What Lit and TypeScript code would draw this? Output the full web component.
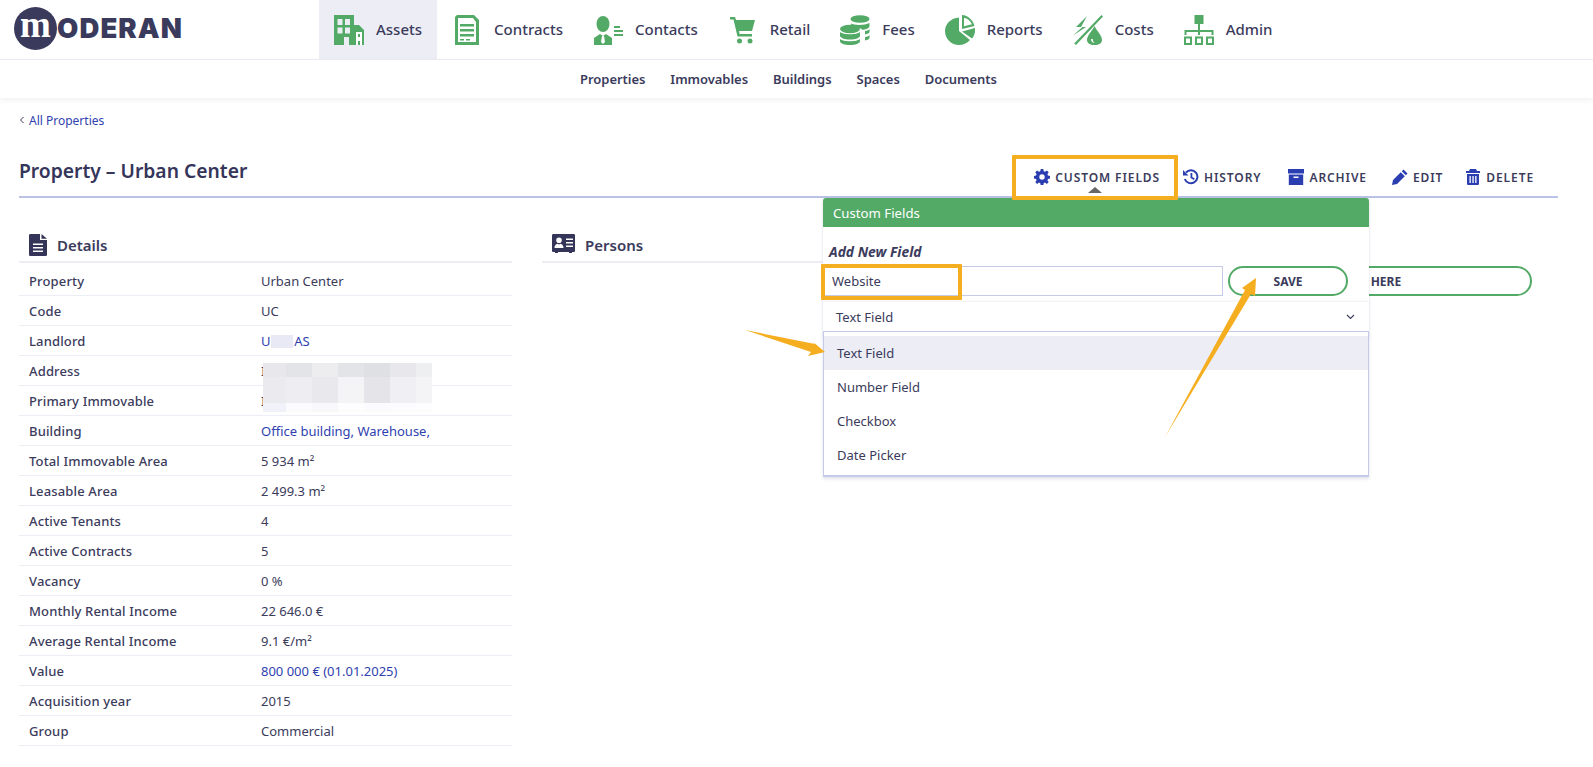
import { LitElement, html, css, svg } from "lit";
import { customElement } from "lit/decorators.js";

const NAV = [
  ["Assets", "assets"], ["Contracts", "contracts"], ["Contacts", "contacts"], ["Retail", "retail"],
  ["Fees", "fees"], ["Reports", "reports"], ["Costs", "costs"], ["Admin", "admin"],
];
const SUB = ["Properties", "Immovables", "Buildings", "Spaces", "Documents"];
const ROWS: [string, string, boolean?][] = [
  ["Property", "Urban Center"], ["Code", "UC"], ["Landlord", "U       AS", true], ["Address", "I"],
  ["Primary Immovable", "I"], ["Building", "Office building, Warehouse,", true],
  ["Total Immovable Area", "5 934 m²"], ["Leasable Area", "2 499.3 m²"], ["Active Tenants", "4"],
  ["Active Contracts", "5"], ["Vacancy", "0 %"], ["Monthly Rental Income", "22 646.0 €"],
  ["Average Rental Income", "9.1 €/m²"], ["Value", "800 000 € (01.01.2025)", true],
  ["Acquisition year", "2015"], ["Group", "Commercial"],
];
const PIX = [
  ["#e8e8ec", "#e3e4e8", "#ededf0", "#e3e4e8", "#dfe0e4", "#e8e8ec", "#eeeff1"],
  ["#ebebef", "#eeeef2", "#e9e9ed", "#f4f4f7", "#e5e5e9", "#f0f0f4", "#f4f4f7"],
  ["#f1f2f9", "#fbfbfd", "#f8f8fb", "#fdfdfe", "#fbfbfd", "#fcfcfe", "#fdfdfe"],
];

const navIcons: Record<string, unknown> = {
  assets: svg`<path fill-rule="evenodd" d="M0 0h20v10h5l5 5v15H20v-8h0V30h-5v-8h-5v8H0zM3.500 4v6h5V4zM11 4v6h5V4zM3.500 12.500v6h5v-6zM11 12.500v6h5v-6z"/><path fill="#fff" d="M22 17h6v13h-2v-4h-2v4h-2zM24 19v3h2v-3z" fill-rule="evenodd"/>`,
  contracts: svg`<path fill-rule="evenodd" d="M5 0h17l5 5v25H3V2zM6 3v24h18V7l-3-4z"/><path d="M8 9h14v2.500H8zM8 14h14v2.500H8zM8 19h14v2.500H8zM8 24h4v1.500H8zM14 24h4v1.500h-4z"/>`,
  contacts: svg`<ellipse cx="10" cy="9" rx="6.500" ry="8"/><path d="M1 30v-7l6-4 3 2 3-2 6 4v7z"/><path fill="#fff" d="M9 21h2l1 6-2 2-2-2z"/><path d="M21 11h6v2h-6zM21 15h9v2h-9zM21 19h9v2h-9z"/>`,
  retail: svg`<path d="M2 2h5l1 3h19l-3 11H11l.6 3H24v2.500H9.500L5.500 4.500H2z"/><circle cx="11.500" cy="26" r="2.500"/><circle cx="22" cy="26" r="2.500"/>`,
  fees: svg`<ellipse cx="20" cy="4" rx="9.500" ry="3.800"/><path d="M11 8.500c3 2 14 2 18.500-.5v3c0 2-3 3.500-7 3.800-3-2.500-7-3.500-11-3.500zM25 16c2 0 4.500-1 4.500-2.500V17c0 1-2 2-4.500 2.500zM25 22c2 0 4.500-1 4.500-2.500V23c0 1-2 2-4.500 2.500z"/><ellipse cx="10" cy="14" rx="10" ry="4.200"/><path d="M0 17c3 3 17 3 20 0v3.500c0 2.500-4.500 4-10 4s-10-1.500-10-4zM0 24c3 3 17 3 20 0v2c0 2.500-4.500 4-10 4s-10-1.500-10-4z"/>`,
  reports: svg`<path d="M14 2.500C6 3 0 9 0 16c0 8 6.500 14 14 14 4 0 8-1.500 11-5L14 16z"/><path fill-rule="evenodd" d="M17 0c6 .5 11 5 12.500 11L17 14zM19 2.800v8.400l8-2C25.500 6 22.500 3.500 19 2.800z"/><path d="M17 16.500 30 13c.5 4-.5 7.500-3 10.500z"/>`,
  costs: svg`<path d="M14 1 3 12h6.500L0 20.500 13 12H8zM28.500 0 30 1.500 3 30l-1.800-1.500z"/><path fill-rule="evenodd" d="M21.500 11c2 4.500 7.500 9.500 7.500 14 0 3-3 5-7.500 5S14 28 14 25c0-4.500 5.500-9.500 7.500-14zM18 24c0 2.500 1.500 3.800 3.500 4-1-.8-1.700-2-1.700-4z"/>`,
  admin: svg`<path d="M10.500 0h9v9h-9zM14 9h2v6h13.500v5h-2v-3H16v3h-2v-3H2.500v3h-2v-5H14z"/><path fill-rule="evenodd" d="M0 21.500h8V30H0zM2 23.500V28h4v-4.500zM11 21.500h8V30h-8zM13 23.500V28h4v-4.500zM22 21.500h8V30h-8zM24 23.500V28h4v-4.500z"/>`,
};

@customElement("app-root")
export class AppRoot extends LitElement {
  static styles = css`
    :host { display: block; position: relative; height: 767px; overflow: hidden; background: #fff;
      font-family: "Noto Sans", sans-serif; font-size: 13px; color: #3b3b5c; }
    * { box-sizing: border-box; }
    .top { display: flex; height: 60px; border-bottom: 1px solid #ecedf5; }
    .logo { width: 319px; display: flex; align-items: flex-start; padding: 7px 0 0 14px; }
    .mark { width: 43px; height: 43px; border-radius: 50%; background: #3a3a5c; color: #fff; flex: none;
      display: flex; align-items: center; justify-content: center; font: 700 37px/30px "Liberation Serif", serif;
      padding-bottom: 7px; }
    .word { font: 900 27.500px/30px Inter, sans-serif; color: #3a3a5c; margin: 6px 0 0 0; letter-spacing: 1.100px; }
    .nav { display: flex; }
    .item { display: flex; align-items: center; gap: 12px; padding: 0 15px; font-size: 15px; font-weight: 500; height: 59px; }
    .item span { padding-bottom: 2px; }
    .item.on { background: #ecedf5; }
    .item svg { width: 30px; height: 30px; fill: #53aa67; flex: none; }
    .sub { display: flex; gap: 25px; height: 38px; padding-left: 580px; align-items: center; font-weight: 600; letter-spacing: -0.04px;
      box-shadow: 0 2px 6px rgba(60, 60, 120, 0.08); position: relative; }
    .page { padding: 0 35px 0 19px; }
    .crumb { display: flex; gap: 4px; align-items: center; height: 44px; color: #2f3fb0; font-size: 12px; }
    .chev { width: 6px; height: 8px; fill: none; stroke: #3b3b5c; stroke-width: 1; }
    .head { display: flex; justify-content: space-between; height: 56px; border-bottom: 2px solid #bcc2e4; padding-right: 24px; }
    h1 { margin: 0; font-size: 19.300px; font-weight: 600; line-height: 26px; margin-top: 16px; color: #35355a; }
    .acts { display: flex; gap: 25px; padding-top: 25px; }
    .act { display: flex; gap: 5px; align-items: center; height: 20px; font-size: 12px; font-weight: 600; letter-spacing: 0.9px; white-space: nowrap; }
    .act svg { width: 16px; height: 16px; flex: none; fill: #2a3eb1; }
    .act.hist { margin-left: -2px; }
    .act.arch { margin-left: 2px; }
    .act.del { margin-left: -3px; }
    .cols { display: grid; grid-template-columns: 493px 493px 493px; gap: 30px; }
    .sec { display: flex; align-items: center; gap: 10px; height: 65px; padding: 30px 0 0 10px; border-bottom: 2px solid #ecedf5; font-size: 15px; font-weight: 600; }
    .sec svg { flex: none; fill: #35355a; }
    .row { display: grid; grid-template-columns: 232px 1fr; height: 30px; align-items: center; padding: 0 0 0 10px; border-bottom: 1px solid #ecedf5; }
    .k { font-weight: 500; letter-spacing: 0.15px; }
    .v { white-space: pre; }
    .link { color: #2f3fb0; }
    .table { position: relative; padding-top: 3px; }
    .blk { position: absolute; }
    .b1 { left: 252px; top: 72px; width: 22px; height: 13px; background: #e8e9f5; }
    .b2 { left: 244px; top: 100px; width: 169px; height: 49px; display: grid;
      grid-template-columns: 23px 26px 26px 26px 26px 26px 16px; grid-template-rows: 14px 26px 9px; }
    .third { padding-top: 68px; display: flex; justify-content: flex-end; padding-right: 26px; }
    .pill { width: 320px; height: 30px; border: 2px solid #53aa67; border-radius: 15px; display: flex; align-items: center; justify-content: center;
      font-size: 12px; font-weight: 700; }
    .panel { position: absolute; left: 823px; top: 198px; width: 546px; height: 139px; background: #fff; border-radius: 3px 3px 0 0;
      box-shadow: 0 1px 3px rgba(60, 60, 120, 0.18); }
    .ph { height: 29px; background: #53aa67; color: #fff; padding-left: 10px; display: flex; align-items: center; border-radius: 3px 3px 0 0; font-size: 13.200px; }
    .pl { font-weight: 700; font-style: italic; margin: 15px 0 0 6px; line-height: 20px; height: 20px; font-size: 13.800px; }
    .pr { display: flex; gap: 5px; margin-top: 4px; }
    .inp { width: 400px; height: 30px; border: 1px solid #c5cae9; padding-left: 8px; display: flex; align-items: center; }
    .save { width: 120px; height: 30px; border: 2px solid #53aa67; border-radius: 15px; display: flex; align-items: center; justify-content: center; font-size: 12px; font-weight: 700; }
    .sel { height: 29px; margin-top: 6px; padding: 0 14px 0 13px; display: flex; align-items: center; justify-content: space-between;
      box-shadow: 0 -1px 2px rgba(60, 60, 120, 0.08); }
    .sel svg { width: 9px; height: 6px; fill: none; stroke: #3b3b5c; stroke-width: 1.100; }
    .menu { position: absolute; left: 0; top: 133px; width: 546px; height: 146px; background: #fff; border: 1px solid #c5cae9; border-bottom-width: 2px;
      padding-top: 4px; box-shadow: 0 2px 3px rgba(60, 60, 120, 0.15); }
    .opt { height: 34px; padding-left: 13px; display: flex; align-items: center; }
    .opt.on { background: #ecedf5; }
    .caret { position: absolute; left: 1088px; top: 187px; width: 0; height: 0; border: 7px solid transparent; border-top: 0; border-bottom: 6px solid #666; }
    .box { position: absolute; border: 4px solid #f5ae1f; border-radius: 1px; }
    .b-cf { left: 1012px; top: 155px; width: 166px; height: 45px; }
    .b-in { left: 821px; top: 264px; width: 141px; height: 36px; }
    .arrows { position: absolute; left: 0; top: 0; width: 1593px; height: 767px; fill: #f5ae1f; pointer-events: none; }
  `;

  render() {
    return html`
      <header class="top">
        <div class="logo"><div class="mark">m</div><div class="word">ODERAN</div></div>
        <nav class="nav">
          ${NAV.map(([t, k], i) => html`<div class="item ${i === 0 ? "on" : ""}"><svg viewBox="0 0 30 30">${navIcons[k]}</svg><span>${t}</span></div>`)}
        </nav>
      </header>
      <div class="sub">${SUB.map((s) => html`<span>${s}</span>`)}</div>
      <main class="page">
        <div class="crumb"><svg class="chev" viewBox="0 0 6 8"><path d="M4.500 1 1.500 4l3 3"/></svg><span>All Properties</span></div>
        <div class="head">
          <h1>Property – Urban Center</h1>
          <div class="acts">
            <div class="act"><svg viewBox="0 0 16 16"><path fill-rule="evenodd" d="M6.700 0h2.600l.4 2.200 1.300.6L12.900 1.500l1.800 1.800-1.300 1.900.6 1.300 2 .4v2.600l-2 .4-.6 1.300 1.300 1.900-1.800 1.800-1.900-1.300-1.300.6-.4 2.200H6.700l-.4-2.200-1.300-.6-1.900 1.300-1.800-1.800 1.300-1.900-.6-1.300-2-.4V6.900l2-.4.6-1.300-1.300-1.900 1.800-1.800L5 2.800l1.300-.6zM8 5.300a2.700 2.700 0 1 0 0 5.400 2.700 2.700 0 0 0 0-5.400z"/></svg>CUSTOM FIELDS</div>
            <div class="act hist"><svg viewBox="0 0 16 16"><path fill="none" stroke="#2a3eb1" stroke-width="2" d="M3 3.500A6.500 6.500 0 1 1 1.800 10"/><path d="M0 1l5.500 5.500H0zM7.500 4h1.800v4l2.500 1.500-.9 1.400-3.400-2z"/></svg>HISTORY</div>
            <div class="act arch"><svg viewBox="0 0 16 16"><path fill-rule="evenodd" d="M0 0h16v4.500H0zM.8 5.500h14.400V16H.8zM5.500 7.500v1.500h5V7.500z"/></svg>ARCHIVE</div>
            <div class="act"><svg viewBox="0 0 16 16"><path d="M11.500 0.500 15.500 4.500 13.800 6.200 9.800 2.200zM8.800 3.200l4 4L5 15l-5 1 1-5z"/></svg>EDIT</div>
            <div class="act del"><svg viewBox="0 0 16 16"><path fill-rule="evenodd" d="M5 0h6l1 2h3v2H1V2h3zM2 5h12v9.500c0 1-.6 1.500-1.500 1.500h-9C2.600 16 2 15.500 2 14.500zM4.500 7v7h1.300V7zM7.400 7v7h1.300V7zM10.200 7v7h1.300V7z"/></svg>DELETE</div>
          </div>
        </div>
        <div class="cols">
          <section>
            <div class="sec"><svg width="18" height="22" viewBox="0 0 18 22"><path fill-rule="evenodd" d="M1.500 0H11v6h7v14.500c0 1-.6 1.500-1.500 1.500h-15C.6 22 0 21.500 0 20.500v-19C0 .5.600 0 1.500 0zM12.500 0 18 4.800h-5.500zM4 9.500V11h10V9.500zM4 13v1.500h10V13zM4 16.500V18h10v-1.500z"/></svg>Details</div>
            <div class="table">
              ${ROWS.map(([k, v, l]) => html`<div class="row"><span class="k">${k}</span><span class="v ${l ? "link" : ""}">${v}</span></div>`)}
              <div class="blk b1"></div>
              <div class="blk b2">${PIX.flat().map((c) => html`<i style="background:${c}"></i>`)}</div>
            </div>
          </section>
          <section>
            <div class="sec"><svg width="23" height="19" viewBox="0 0 23 19" style="margin-bottom:3px"><path fill-rule="evenodd" d="M1.500 0h20c1 0 1.500.5 1.500 1.500v15c0 1-.5 1.500-1.500 1.500H20v1h-3v-1H6v1H3v-1H1.500C.5 18 0 17.500 0 16.500v-15C0 .5.500 0 1.500 0zM7 3.500a2.800 2.800 0 1 0 0 5.600 2.800 2.800 0 0 0 0-5.600zM2.500 14h9c0-2.500-1.500-4-3-4.300L7 10.500l-1.500-.8c-1.500.3-3 1.800-3 4.300zM14 4.500V6h7V4.500zM14 8v1.500h7V8zM14 11.500V13h7v-1.500z"/></svg>Persons</div>
          </section>
          <section class="third"><div class="pill">FILE HERE</div></section>
        </div>
      </main>
      <div class="caret"></div>
      <div class="panel">
        <div class="ph">Custom Fields</div>
        <div class="pl">Add New Field</div>
        <div class="pr"><div class="inp">Website</div><div class="save">SAVE</div></div>
        <div class="sel"><span>Text Field</span><svg viewBox="0 0 9 6"><path d="M1 1l3.500 3.500L8 1"/></svg></div>
        <div class="menu">
          <div class="opt on">Text Field</div><div class="opt">Number Field</div><div class="opt">Checkbox</div><div class="opt">Date Picker</div>
        </div>
      </div>
      <div class="box b-cf"></div>
      <div class="box b-in"></div>
      <svg class="arrows" viewBox="0 0 1593 767">
        <polygon points="745,330 815,344 812,341 825,352 808,356 811,352"/>
        <polygon points="1165,437 1245,290 1242,288 1256,278 1255,296 1251,294"/>
      </svg>
    `;
  }
}
